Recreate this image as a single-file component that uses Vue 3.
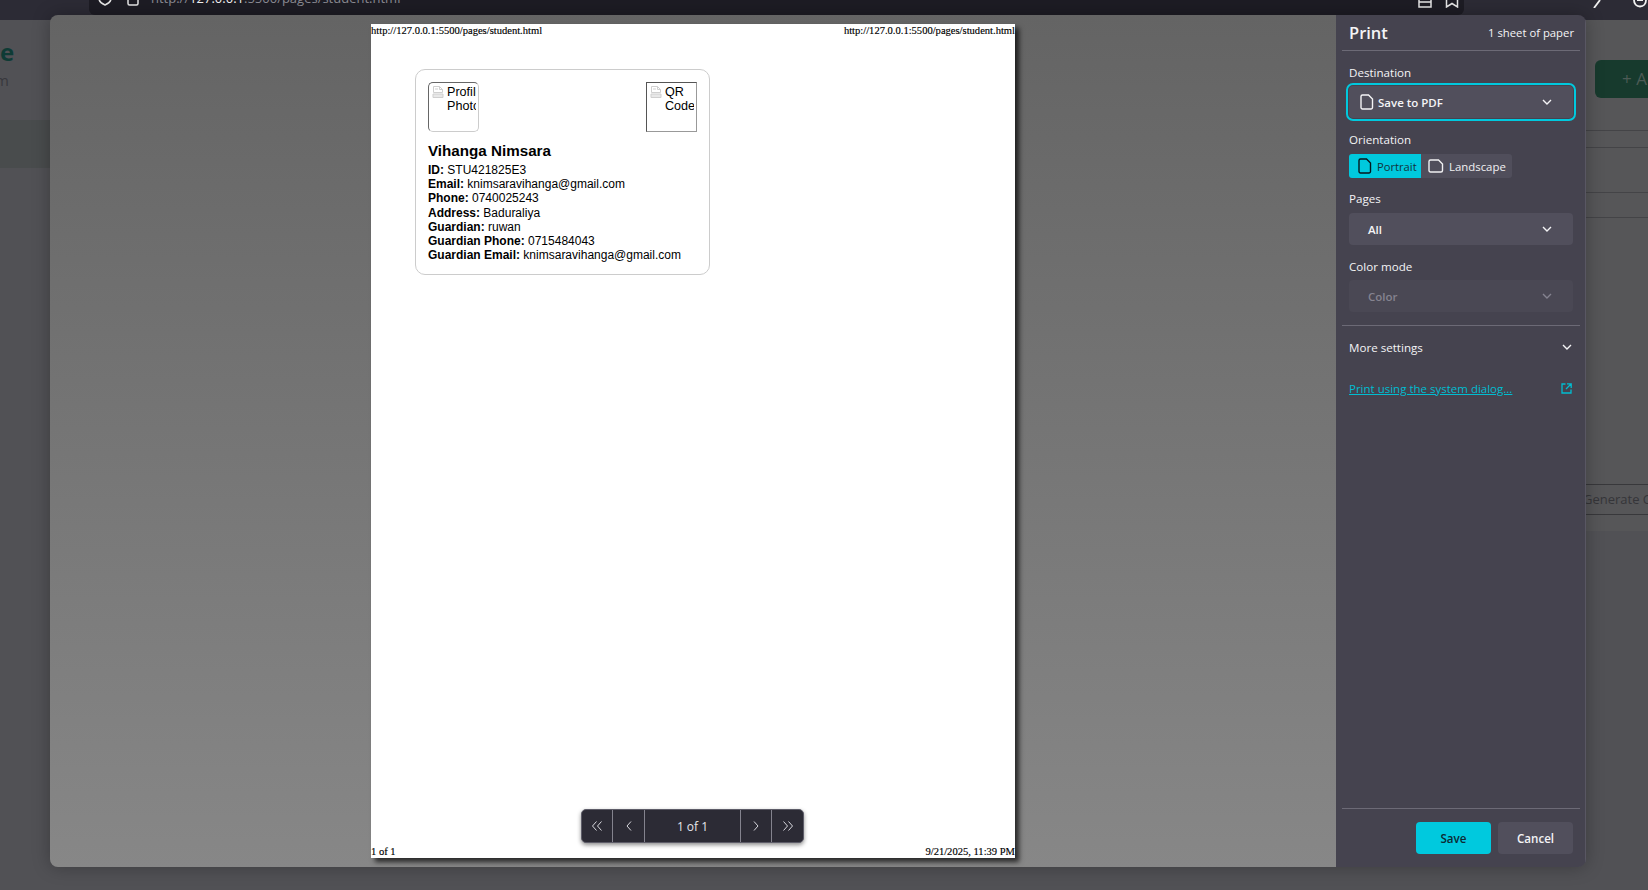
<script setup>
const student = [
  { label: "ID:", value: "STU421825E3" },
  { label: "Email:", value: "knimsaravihanga@gmail.com" },
  { label: "Phone:", value: "0740025243" },
  { label: "Address:", value: "Baduraliya" },
  { label: "Guardian:", value: "ruwan" },
  { label: "Guardian Phone:", value: "0715484043" },
  { label: "Guardian Email:", value: "knimsaravihanga@gmail.com" },
];
const pageUrl = "http://127.0.0.1:5500/pages/student.html";
</script>

<template>
  <div class="screen">
    <!-- browser and page behind the dialog -->
    <header class="chrome">
      <div class="address">
        <svg class="address__icon address__icon--shield" width="14" height="14" viewBox="0 0 14 14">
          <path d="M1 1.5h12v5c0 3-2.5 5-6 6.5-3.5-1.5-6-3.500-6-6.500z" />
        </svg>
        <svg class="address__icon address__icon--lock" width="12" height="12" viewBox="0 0 12 12">
          <rect x="1" y="1" width="10" height="10" rx="1.5" />
        </svg>
        <span class="address__url">http://<b>127.0.0.1</b>:5500/pages/student.html</span>
        <svg class="address__icon address__icon--reader" width="14" height="14" viewBox="0 0 14 14">
          <path d="M1 1h12v12H1zM1 4.5h12M1 8h12" />
        </svg>
        <svg class="address__icon address__icon--star" width="14" height="14" viewBox="0 0 14 14">
          <path d="M1.5 1v12L7 9.5l5.5 3.5V1" />
        </svg>
      </div>
      <div class="chrome__tools">
        <svg width="14" height="8" viewBox="0 0 14 8"><path d="M2 8l6-8" /></svg>
        <svg width="16" height="8" viewBox="0 0 16 8"><path d="M2 0c0 4 2.5 6.5 6 6.5s6-2.5 6-6.5M5 0h6" /></svg>
      </div>
    </header>

    <main class="backdrop">
      <aside class="backdrop__left">
        <div class="backdrop__title">e</div>
        <div class="backdrop__sub">m</div>
        <div class="backdrop__band"></div>
      </aside>
      <section class="backdrop__right">
        <div class="backdrop__add">+ A</div>
        <div class="backdrop__row backdrop__row--a"></div>
        <div class="backdrop__row backdrop__row--b"></div>
        <div class="backdrop__row backdrop__row--c"></div>
        <div class="backdrop__row backdrop__row--d"></div>
        <div class="backdrop__generate">Generate C</div>
      </section>
    </main>

    <!-- print dialog -->
    <div class="dialog">
      <div class="preview">
        <div class="sheet">
          <div class="sheet__line sheet__line--top">
            <span>{{ pageUrl }}</span>
            <span>{{ pageUrl }}</span>
          </div>

          <div class="card">
            <div class="card__images">
              <div class="broken broken--round">
                <svg class="broken__icon" width="12" height="12" viewBox="0 0 12 12">
                  <path d="M1.5 .5h6l3 3v3h-9z" fill="#fff" />
                  <path d="M7.5 .5v3h3M3 3h3" />
                  <path d="M1 8h10v3.500H1z" fill="#e8e8e8" />
                </svg>
                <span class="broken__alt">Profile Photo</span>
              </div>
              <div class="broken">
                <svg class="broken__icon" width="12" height="12" viewBox="0 0 12 12">
                  <path d="M1.5 .5h6l3 3v3h-9z" fill="#fff" />
                  <path d="M7.5 .5v3h3M3 3h3" />
                  <path d="M1 8h10v3.500H1z" fill="#e8e8e8" />
                </svg>
                <span class="broken__alt">QR Code</span>
              </div>
            </div>
            <h3 class="card__name">Vihanga Nimsara</h3>
            <p v-for="item in student" :key="item.label" class="card__line">
              <strong>{{ item.label }}</strong> {{ item.value }}
            </p>
          </div>

          <div class="sheet__line sheet__line--bottom">
            <span>1 of 1</span>
            <span>9/21/2025, 11:39 PM</span>
          </div>

          <nav class="pager">
            <button class="pager__btn">
              <svg width="12" height="12" viewBox="0 0 12 12"><path d="M5.5 1.5L1.5 6l4 4.5M10.5 1.5L6.5 6l4 4.5" /></svg>
            </button>
            <button class="pager__btn">
              <svg width="12" height="12" viewBox="0 0 12 12"><path d="M8 1.5L4 6l4 4.5" /></svg>
            </button>
            <span class="pager__count">1 of 1</span>
            <button class="pager__btn">
              <svg width="12" height="12" viewBox="0 0 12 12"><path d="M4 1.5L8 6l-4 4.5" /></svg>
            </button>
            <button class="pager__btn">
              <svg width="12" height="12" viewBox="0 0 12 12"><path d="M1.5 1.5l4 4.5-4 4.5M6.5 1.5l4 4.5-4 4.5" /></svg>
            </button>
          </nav>
        </div>
      </div>

      <aside class="panel">
        <div class="panel__head">
          <h1 class="panel__title">Print</h1>
          <span class="panel__sheets">1 sheet of paper</span>
        </div>
        <div class="panel__rule"></div>

        <div class="field field--dest">
          <label class="field__label">Destination</label>
          <div class="select select--focus">
            <svg class="doc" width="14" height="16" viewBox="0 0 14 16">
              <path d="M2.5 1h6l4 4v8.5a1.5 1.5 0 0 1-1.5 1.5H2.5A1.5 1.5 0 0 1 1 13.5v-11A1.5 1.5 0 0 1 2.5 1z" />
            </svg>
            <span class="select__text">Save to PDF</span>
            <svg class="chev" width="10" height="6" viewBox="0 0 10 6"><path d="M1 1l4 4 4-4" /></svg>
          </div>
        </div>

        <div class="field">
          <label class="field__label">Orientation</label>
          <div class="orient">
            <button class="orient__btn orient__btn--on">
              <svg class="doc" width="14" height="16" viewBox="0 0 14 16">
                <path d="M2.5 1h6l4 4v8.5a1.5 1.5 0 0 1-1.5 1.5H2.500A1.5 1.5 0 0 1 1 13.5v-11A1.5 1.5 0 0 1 2.5 1z" />
              </svg>
              Portrait
            </button>
            <button class="orient__btn">
              <svg class="doc" width="16" height="14" viewBox="0 0 16 14">
                <path d="M2.5 1h8l4 4v6.5a1.5 1.5 0 0 1-1.5 1.5H2.5A1.5 1.5 0 0 1 1 11.5v-9A1.5 1.5 0 0 1 2.5 1z" />
              </svg>
              Landscape
            </button>
          </div>
        </div>

        <div class="field field--pages">
          <label class="field__label">Pages</label>
          <div class="select">
            <span class="select__text">All</span>
            <svg class="chev" width="10" height="6" viewBox="0 0 10 6"><path d="M1 1l4 4 4-4" /></svg>
          </div>
        </div>

        <div class="field field--color">
          <label class="field__label">Color mode</label>
          <div class="select select--off">
            <span class="select__text">Color</span>
            <svg class="chev" width="10" height="6" viewBox="0 0 10 6"><path d="M1 1l4 4 4-4" /></svg>
          </div>
        </div>

        <div class="panel__rule panel__rule--mid"></div>

        <div class="more">
          <span>More settings</span>
          <svg class="chev" width="10" height="6" viewBox="0 0 10 6"><path d="M1 1l4 4 4-4" /></svg>
        </div>

        <div class="system">
          <a class="system__link">Print using the system dialog...</a>
          <svg class="system__icon" width="11" height="11" viewBox="0 0 11 11">
            <path d="M4.5 1H1v9h9V6.5M6 .8h4.2V5M10 1L5 6" />
          </svg>
        </div>

        <div class="panel__foot">
          <div class="panel__rule"></div>
          <div class="actions">
            <button class="action action--save">Save</button>
            <button class="action">Cancel</button>
          </div>
        </div>
      </aside>
    </div>
  </div>
</template>

<style>
html,
body {
  margin: 0;
  background: #515155;
}
</style>

<style scoped>
.screen {
  position: relative;
  width: 1648px;
  height: 890px;
  overflow: hidden;
  display: flex;
  flex-direction: column;
  background: #515155;
  font-family: "Open Sans", "Noto Sans", sans-serif;
}

svg {
  fill: none;
  stroke: currentColor;
  display: block;
}

/* browser bar, mostly cropped */
.chrome {
  height: 20px;
  flex: none;
  display: flex;
  background: #2c2b35;
}
.address {
  margin-left: 89px;
  width: 1382px;
  height: 15px;
  display: flex;
  align-items: flex-end;
  overflow: hidden;
  background: #1d1c24;
  border-radius: 0 0 6px 6px;
  color: #e6e6e6;
}
.address__icon {
  flex: none;
  margin-bottom: 9px;
  stroke-width: 1.5;
}
.address__icon--shield {
  margin-left: 9px;
}
.address__icon--lock {
  margin-left: 15px;
}
.address__url {
  margin-left: 12px;
  margin-bottom: 8px;
  font-size: 13px;
  line-height: 18px;
  color: #8b8b93;
  white-space: nowrap;
}
.address__url b {
  font-weight: 400;
  color: #f2f2f2;
}
.address__icon--reader {
  margin-left: auto;
  margin-bottom: 7px;
}
.address__icon--star {
  margin-left: 13px;
  margin-right: 5px;
  margin-bottom: 7px;
}
.chrome__tools {
  margin-left: 128px;
  display: flex;
  gap: 26px;
  color: #f1f1f1;
}
.chrome__tools svg {
  stroke-width: 1.8;
}

/* dimmed page behind the dialog */
.backdrop {
  flex: 1;
  display: flex;
  justify-content: space-between;
  min-height: 0;
}
.backdrop__left {
  width: 50px;
  overflow: hidden;
}
.backdrop__title {
  margin-top: 17px;
  font-size: 24px;
  line-height: 30px;
  font-weight: 700;
  color: #0e3b35;
}
.backdrop__sub {
  margin: 3px 0 0 -5px;
  font-size: 15px;
  line-height: 20px;
  color: #38383d;
}
.backdrop__band {
  margin-top: 30px;
  height: 48px;
  background: #494c4d;
}
.backdrop__right {
  width: 62px;
  overflow: hidden;
  background: #565658;
  height: 511px;
}
.backdrop__add {
  margin: 40px 0 0 9px;
  width: 80px;
  height: 38px;
  padding-left: 27px;
  box-sizing: border-box;
  border-radius: 6px 0 0 6px;
  background: #173a2d;
  color: #4d5a55;
  font-size: 17px;
  line-height: 38px;
  white-space: nowrap;
}
.backdrop__row {
  border-bottom: 1px solid #444447;
  box-sizing: border-box;
}
.backdrop__row--a {
  height: 33px;
}
.backdrop__row--b {
  height: 17px;
}
.backdrop__row--c {
  height: 45px;
}
.backdrop__row--d {
  height: 25px;
}
.backdrop__generate {
  margin-top: 266px;
  height: 31px;
  box-sizing: border-box;
  border-top: 1px solid #38383b;
  border-bottom: 1px solid #38383b;
  text-indent: -3px;
  font-size: 13px;
  line-height: 29px;
  color: #353539;
  white-space: nowrap;
}

/* print dialog */
.dialog {
  position: absolute;
  left: 50px;
  top: 15px;
  width: 1536px;
  height: 852px;
  display: flex;
  border-radius: 8px;
  overflow: hidden;
  box-shadow: 0 0 18px rgba(0, 0, 0, 0.28);
}
.preview {
  flex: 1;
  padding-top: 9px;
  display: flex;
  justify-content: center;
  align-items: flex-start;
  background: linear-gradient(180deg, #646464 0%, #878787 100%);
}
.sheet {
  position: relative;
  width: 644px;
  height: 834px;
  display: flex;
  flex-direction: column;
  background: #fff;
  color: #000;
  box-shadow: 4px 4px 5px rgba(0, 0, 0, 0.7);
}
.sheet__line {
  display: flex;
  justify-content: space-between;
  font-family: "Liberation Serif", serif;
  font-size: 10.55px;
  line-height: 12px;
  white-space: nowrap;
  -webkit-text-stroke: 0.15px #000;
}
.sheet__line--top {
  height: 12px;
  line-height: 13px;
}
.sheet__line--bottom {
  margin-top: auto;
}

.card {
  margin: 33px 0 0 44px;
  width: 295px;
  height: 206px;
  box-sizing: border-box;
  padding: 12px;
  border: 1px solid #ccc;
  border-radius: 10px;
  font-family: "Liberation Sans", sans-serif;
  font-size: 12px;
  line-height: 14.2px;
}
.card__images {
  display: flex;
  justify-content: space-between;
  margin-bottom: 10px;
}
.broken {
  width: 51px;
  height: 50px;
  box-sizing: border-box;
  padding: 2px 0 0 3px;
  display: flex;
  gap: 3px;
  overflow: hidden;
  border-style: solid;
  border-width: 1px;
  border-color: #555 #999 #999 #555;
  line-height: 14px;
  font-size: 12.6px;
}
.broken--round {
  border-radius: 5px;
  border-color: #666 #ccc #ccc #666;
}
.broken__icon {
  flex: none;
  margin-top: 1px;
  color: #cfcfcf;
}
.broken__alt {
  width: 28.5px;
  flex: none;
  overflow: hidden;
}
.card__name {
  margin: 0 0 3px;
  font-size: 15.2px;
  line-height: 18px;
  font-weight: 700;
}
.card__line {
  margin: 0;
}

.pager {
  position: absolute;
  left: 210px;
  top: 785px;
  width: 223px;
  height: 34px;
  box-sizing: border-box;
  display: flex;
  align-items: stretch;
  background: #2c2b35;
  border: 1px solid #5d5c68;
  border-radius: 5px;
  box-shadow: 0 2px 4px rgba(0, 0, 0, 0.45);
  color: #e6e6ea;
}
.pager__btn {
  width: 31px;
  padding: 0;
  display: flex;
  align-items: center;
  justify-content: center;
  border: 0;
  background: none;
  color: #d8d8de;
}
.pager__btn:nth-child(1) {
  border-right: 1px solid #84838e;
}
.pager__btn:nth-child(2) {
  border-right: 1px solid #84838e;
  width: 32px;
}
.pager__btn:nth-child(4) {
  border-left: 1px solid #84838e;
}
.pager__btn:nth-child(5) {
  border-left: 1px solid #84838e;
  width: 32px;
}
.pager__count {
  flex: 1;
  text-align: center;
  font-size: 12px;
  line-height: 33px;
}

/* settings column */
.panel {
  width: 250px;
  flex: none;
  display: flex;
  flex-direction: column;
  background: #45434f;
  color: #f4f4f6;
  font-size: 11.6px;
  box-shadow: inset -1px 0 #595763;
}
.panel__head {
  height: 35px;
  padding: 0 12px 0 13px;
  display: flex;
  align-items: center;
  justify-content: space-between;
}
.panel__title {
  margin: 0;
  font-size: 16.5px;
  font-weight: 600;
}
.panel__sheets {
  font-size: 11.3px;
}
.panel__rule {
  height: 1px;
  margin: 0 6px;
  background: #6c6a76;
  flex: none;
}
.panel__rule--mid {
  margin-top: 13px;
}
.field {
  margin-top: 14px;
  padding: 0 13px;
}
.field--pages {
  margin-top: 13px;
}
.field__label {
  display: block;
  height: 16px;
  margin-bottom: 6px;
  line-height: 16px;
}
.field--dest .field__label,
.field--color .field__label {
  margin-bottom: 5px;
}
.select {
  height: 32px;
  box-sizing: border-box;
  padding: 0 21px 0 19px;
  display: flex;
  align-items: center;
  gap: 4px;
  border-radius: 4px;
  background: #514f5c;
  font-weight: 600;
}
.select--focus {
  padding-left: 11px;
  outline: 2px solid #00c9de;
  outline-offset: 1px;
}
.select--off {
  background: #4a4854;
  color: #858390;
}
.select__text {
  font-size: 11.5px;
}
.doc {
  flex: none;
  stroke-width: 1.4;
}
.chev {
  margin-left: auto;
  flex: none;
  stroke-width: 1.4;
}
.orient {
  display: flex;
  width: 163px;
  height: 24px;
  border-radius: 3px;
  overflow: hidden;
}
.orient__btn {
  padding: 0 0 0 7px;
  display: flex;
  align-items: center;
  gap: 5px;
  border: 0;
  font-family: inherit;
  font-size: 11.4px;
  background: #504e5b;
  color: #f0f0f2;
  white-space: nowrap;
  flex: 1;
}
.orient__btn--on {
  flex: none;
  width: 72px;
  padding-left: 9px;
  background: #00c9de;
  color: #12323a;
  font-size: 11.2px;
}
.orient__btn--on .doc {
  color: #06161c;
}
.more {
  height: 42px;
  padding: 0 14px 0 13px;
  display: flex;
  align-items: center;
  justify-content: space-between;
}
.system {
  margin-top: 12px;
  height: 16px;
  padding: 0 14px 0 13px;
  display: flex;
  align-items: center;
  justify-content: space-between;
  color: #00bdd1;
}
.system__link {
  font-size: 11.5px;
  text-decoration: underline;
}
.system__icon {
  stroke-width: 1.3;
}
.panel__foot {
  margin-top: auto;
}
.actions {
  padding: 13px 13px 13px 0;
  display: flex;
  justify-content: flex-end;
  gap: 7px;
}
.action {
  width: 75px;
  height: 32px;
  padding: 0;
  border: 0;
  border-radius: 4px;
  background: #514f5c;
  color: #f4f4f6;
  font-family: inherit;
  font-size: 11.6px;
  font-weight: 600;
}
.action--save {
  background: #00c9de;
  color: #0d2a33;
}
</style>
